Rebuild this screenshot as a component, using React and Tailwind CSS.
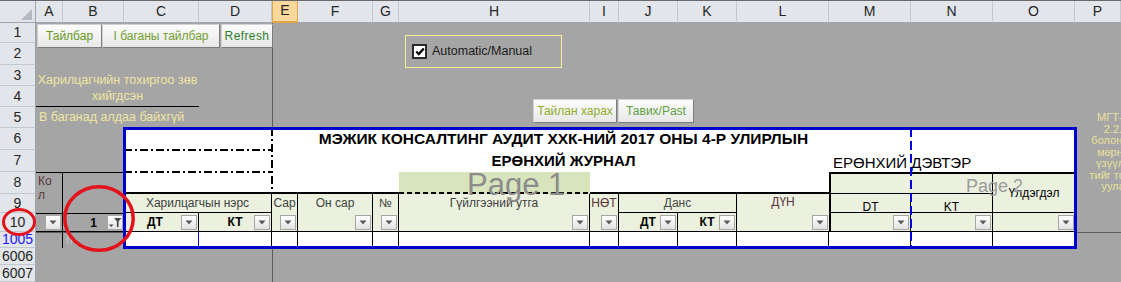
const sans = "font-['Liberation_Sans',Arial,sans-serif]";

const letters = ["A", "B", "C", "D", "E", "F", "G", "H", "I", "J", "K", "L", "M", "N", "O", "P"];
const rowNums = ["1", "2", "3", "4", "5", "6", "7", "8", "9", "10", "1005", "6006", "6007"];
const sideNote = ["МГТ-ий", "2.2.5", "болон 3.1", "мөрний", "үзүүлэл", "тийг тохир", "уулах"];

function Drop({ filter }) {
  return (
    <span className="absolute right-px bottom-px flex h-[15px] w-[16px] items-center justify-center border border-[#a6a6a6] bg-linear-to-b from-white to-[#e3e3e3]">
      {filter ? (
        <svg width="14" height="13" viewBox="0 0 14 13">
          <path d="M1 8.5h4.5L3.25 11z" fill="#4a4a4a" />
          <path d="M6 2h7.5l-2.9 3.6V11H8.9V5.6z" fill="#4a4a4a" />
        </svg>
      ) : (
        <svg width="8" height="5" viewBox="0 0 8 5">
          <path d="M0.5 0.5h7L4 4.5z" fill="#5a5a5a" />
        </svg>
      )}
    </span>
  );
}

function Btn({ className, children }) {
  return (
    <div
      className={`absolute flex h-[24px] items-center justify-center border border-[#d2d2d2] border-r-[#7c7c7c] border-b-[#7c7c7c] bg-linear-to-b from-[#fcfcfc] to-[#e8e8e8] text-[12px] whitespace-nowrap ${className}`}
    >
      {children}
    </div>
  );
}

export default function App() {
  return (
    <div
      className={`relative grid h-[282px] w-[1121px] overflow-hidden bg-[#a5a5a5] text-[12px] ${sans} grid-cols-[36px_27px_61px_75px_73px_26px_75px_26px_191px_29px_59px_59px_92px_82px_82px_82px_46px] grid-rows-[22px_21px_22px_21px_21px_21px_22px_22px_22px_19px_19px_16px_17px_17px]`}
    >
      {/* frozen panes */}
      <div className="col-[6/7] row-[2/15] w-px justify-self-start bg-[#5e5e5e]" />
      <div className="col-[1/18] row-[12/13] h-px self-start bg-[#5e5e5e]" />

      {/* column headers */}
      <div className="col-[1/18] row-[1/2] grid grid-cols-subgrid">
        <div className="relative border-r border-b border-[#9da5b0] bg-[#e2e5ea]">
          <svg className="absolute top-0 left-0" width="36" height="22">
            <path d="M32 9V20H21z" fill="#b4b9c1" />
          </svg>
        </div>
        {letters.map((l) =>
          l === "E" ? (
            <div
              key={l}
              className="flex items-center justify-center border-x border-b-2 border-[#e3a446] bg-[#f9d99b] text-[14px] text-[#262626]"
            >
              {l}
            </div>
          ) : (
            <div
              key={l}
              className="flex items-center justify-center border-r border-b border-r-[#c3c8cf] border-b-[#9da5b0] bg-[#e2e5ea] text-[14px] text-[#262626]"
            >
              {l}
            </div>
          )
        )}
      </div>
      <div className="relative z-10 col-[1/18] row-[1/2] h-px self-start bg-[#6a6a6a]" />

      {/* row headers */}
      <div className="col-[1/2] row-[2/15] grid grid-rows-subgrid">
        {rowNums.map((r) => (
          <div
            key={r}
            className={`flex items-center justify-center border-r border-b border-r-[#9da5b0] border-b-[#c3c8cf] bg-[#e2e5ea] text-[14px] ${
              r === "1005" ? "text-[#1a1aff]" : "text-[#262626]"
            }`}
          >
            {r}
          </div>
        ))}
      </div>

      {/* notes on the grey area */}
      <div className="col-[2/5] row-[4/6] flex flex-col items-center justify-end border-b border-black pb-[2px] text-[12.5px] leading-[16px] whitespace-nowrap text-[#efe6a2]">
        <span>Харилцагчийн тохиргоо зөв</span>
        <span>хийгдсэн</span>
      </div>
      <div className="col-[2/5] row-[6/7] flex items-center pl-[3px] text-[12.5px] whitespace-nowrap text-[#efe6a2]">
        В баганад алдаа байхгүй
      </div>
      <div className="col-[17/18] row-[6/12] w-[82px] justify-self-start pt-[5px] text-center text-[11px] leading-[11.5px] whitespace-nowrap text-[#e9e09c]">
        {sideNote.map((t) => (
          <div key={t}>{t}</div>
        ))}
      </div>

      {/* A:B block */}
      <div className="col-[2/3] row-[9/11] border-t border-r border-black px-[2px] pt-px leading-[14px] text-[#5a3535]">
        Ко
        <br />л
      </div>
      <div className="col-[3/4] row-[9/11] border-t border-black" />
      <div className="relative col-[2/3] row-[11/12] border-y border-r border-black">
        <Drop />
      </div>
      <div className="relative col-[3/4] row-[11/12] flex items-center justify-center border-y border-black font-bold text-black">
        1
        <Drop filter />
      </div>
      <div className="col-[2/3] row-[12/13] border-r border-black" />
      <div className="col-[3/4] row-[12/13] pl-[3px] leading-[16px] text-[#c4c4c4]">h</div>

      {/* title area rows 6-8 */}
      <div className="col-[4/6] row-[7/8] flex flex-col justify-end bg-white">
        <div className="h-[2px] translate-y-px bg-[repeating-linear-gradient(90deg,#000_0_8px,transparent_8px_11px,#000_11px_13px,transparent_13px_16px)]" />
      </div>
      <div className="col-[4/6] row-[8/9] flex flex-col justify-end bg-white">
        <div className="h-[2px] translate-y-px bg-[repeating-linear-gradient(90deg,#000_0_8px,transparent_8px_11px,#000_11px_13px,transparent_13px_16px)]" />
      </div>
      <div className="col-[4/6] row-[9/10] border-b-2 border-black bg-white" />
      <div className="col-[6/14] row-[7/10] border-b-2 border-black bg-white" />
      <div className="col-[5/6] row-[7/10] w-[2px] translate-x-px justify-self-end bg-[repeating-linear-gradient(180deg,#000_0_8px,transparent_8px_11px,#000_11px_13px,transparent_13px_16px)]" />
      <div className="col-[9/10] row-[9/10] flex flex-col justify-end bg-[#d8e4bc]">
        <div className="h-[2px] bg-[repeating-linear-gradient(90deg,#000_0_5px,transparent_5px_8px)]" />
      </div>
      <div className="col-[7/14] row-[7/8] flex items-center justify-center text-[15.5px] font-bold whitespace-nowrap text-black">
        МЭЖИК КОНСАЛТИНГ АУДИТ ХХК-НИЙ 2017 ОНЫ 4-Р УЛИРЛЫН
      </div>
      <div className="col-[7/14] row-[8/9] flex items-center justify-center text-[15px] font-bold whitespace-nowrap text-black">
        ЕРӨНХИЙ ЖУРНАЛ
      </div>
      <div className="col-[14/17] row-[7/9] bg-white" />
      <div className="col-[14/17] row-[8/9] flex items-end pl-[4px] text-[15px] leading-[18px] whitespace-nowrap text-black">
        ЕРӨНХИЙ ДЭВТЭР
      </div>
      <div className="col-[14/16] row-[9/10] border-t-2 border-r border-l-2 border-b border-black bg-[#ebf1de]" />
      <div className="col-[16/17] row-[9/11] flex items-center justify-center border-t-2 border-b border-black bg-[#ebf1de] text-black">
        Үлдэгдэл
      </div>

      {/* header rows 9-10 */}
      <div className="col-[4/6] row-[10/11] flex items-center justify-center border-r border-b border-black bg-[#ebf1de] text-[#404040]">
        Харилцагчын нэрс
      </div>
      <div className="relative col-[4/5] row-[11/12] flex items-center justify-center border-r border-b border-black bg-[#ebf1de] pr-[12px] font-bold text-black">
        ДТ
        <Drop />
      </div>
      <div className="relative col-[5/6] row-[11/12] flex items-center justify-center border-r border-b border-black bg-[#ebf1de] font-bold text-black">
        КТ
        <Drop />
      </div>
      <div className="relative col-[6/7] row-[10/12] flex justify-center border-r border-b border-black bg-[#ebf1de] pt-[2px] leading-[15px] text-[#404040]">
        Сар
        <Drop />
      </div>
      <div className="relative col-[7/8] row-[10/12] flex justify-center border-r border-b border-black bg-[#ebf1de] pt-[2px] leading-[15px] text-[#404040]">
        Он сар
        <Drop />
      </div>
      <div className="relative col-[8/9] row-[10/12] flex justify-center border-r border-b border-black bg-[#ebf1de] pt-[2px] leading-[15px] text-[#404040]">
        №
        <Drop />
      </div>
      <div className="relative col-[9/10] row-[10/12] flex justify-center border-r border-b border-black bg-[#ebf1de] pt-[2px] leading-[15px] text-[#404040]">
        Гүйлгээний утга
        <Drop />
      </div>
      <div className="relative col-[10/11] row-[10/12] flex justify-center border-r border-b border-black bg-[#ebf1de] pt-[2px] leading-[15px] text-[#5a3535]">
        НӨТ
        <Drop />
      </div>
      <div className="col-[11/13] row-[10/11] flex items-center justify-center border-r border-b border-black bg-[#ebf1de] text-[#474747]">
        Данс
      </div>
      <div className="relative col-[11/12] row-[11/12] flex items-center justify-center border-r border-b border-black bg-[#ebf1de] font-bold text-black">
        ДТ
        <Drop />
      </div>
      <div className="relative col-[12/13] row-[11/12] flex items-center justify-center border-r border-b border-black bg-[#ebf1de] font-bold text-black">
        КТ
        <Drop />
      </div>
      <div className="relative col-[13/14] row-[10/12] flex justify-center border-b border-black bg-[#ebf1de] pt-[1px] leading-[15px] text-[#5a3540]">
        ДҮН
        <Drop />
      </div>
      <div className="col-[14/15] row-[10/11] flex justify-center border-r border-b border-l-2 border-black bg-[#ebf1de] pt-[6px] leading-[14px] text-black">
        DT
      </div>
      <div className="col-[15/16] row-[10/11] flex justify-center border-r border-b border-black bg-[#ebf1de] pt-[6px] leading-[14px] text-black">
        KT
      </div>
      <div className="relative col-[14/15] row-[11/12] border-r border-b border-l-2 border-black bg-[#ebf1de]">
        <Drop />
      </div>
      <div className="relative col-[15/16] row-[11/12] border-r border-b border-black bg-[#ebf1de]">
        <Drop />
      </div>
      <div className="relative col-[16/17] row-[11/12] border-b border-black bg-[#ebf1de]">
        <Drop />
      </div>

      {/* data row 1005 */}
      <div className="col-[4/5] row-[12/13] border-r border-[#0000cc] bg-white" />
      <div className="col-[5/6] row-[12/13] border-r border-black bg-white" />
      <div className="col-[6/7] row-[12/13] border-r border-black bg-white" />
      <div className="col-[7/8] row-[12/13] border-r border-black bg-white" />
      <div className="col-[8/9] row-[12/13] border-r border-black bg-white" />
      <div className="col-[9/10] row-[12/13] border-r border-black bg-white" />
      <div className="col-[10/11] row-[12/13] border-r border-black bg-white" />
      <div className="col-[11/12] row-[12/13] border-r border-black bg-white" />
      <div className="col-[12/13] row-[12/13] border-r border-black bg-white" />
      <div className="col-[13/14] row-[12/13] border-r border-black bg-white" />
      <div className="col-[14/15] row-[12/13] border-r border-black bg-white" />
      <div className="col-[15/16] row-[12/13] border-r border-black bg-white" />
      <div className="col-[16/17] row-[12/13] bg-white" />

      {/* page break and print area frame */}
      <div className="z-10 col-[15/16] row-[7/13] -ml-px w-[2px] justify-self-start bg-[repeating-linear-gradient(180deg,#0000dd_0_9px,transparent_9px_13px)]" />
      <div className="pointer-events-none z-10 col-[4/17] row-[7/13] -mt-px -mr-[2px] -mb-px -ml-px border-[3px] border-[#0000cc]" />

      {/* page watermarks */}
      <div className="pointer-events-none absolute top-[169px] left-[467px] z-20 text-[31px] leading-none whitespace-nowrap text-[#8c8c8c]">
        Page 1
      </div>
      <div className="pointer-events-none absolute top-[177px] left-[966px] z-20 text-[18px] leading-none whitespace-nowrap text-[#9c9c9c]">
        Page 2
      </div>

      {/* floating buttons */}
      <Btn className="top-[24px] left-[37px] z-20 w-[65px] text-[#679a22]">Тайлбар</Btn>
      <Btn className="top-[24px] left-[102px] z-20 w-[118px] text-[#74a030]">I баганы тайлбар</Btn>
      <Btn className="top-[24px] left-[221px] z-20 w-[52px] tracking-[0.4px] text-[#2f7f2a]">Refresh</Btn>
      <Btn className="top-[99px] left-[533px] z-20 w-[84px] text-[#8fae2c]">Тайлан харах</Btn>
      <Btn className="top-[99px] left-[618px] z-20 w-[76px] text-[#5fa03e]">Тавих/Past</Btn>

      <div className="absolute top-[35px] left-[405px] z-20 flex h-[33px] w-[157px] items-center border border-[#f6f093] pl-[6px]">
        <span className="flex h-[15px] w-[15px] items-center justify-center border-2 border-[#2a2a2a] bg-white">
          <svg width="10" height="9" viewBox="0 0 10 9">
            <path d="M1.2 4.4l2.6 2.7L8.8 1.4" fill="none" stroke="#000" strokeWidth="2.2" />
          </svg>
        </span>
        <span className="ml-[5px] text-[12.5px] whitespace-nowrap text-[#1a1a1a]">Automatic/Manual</span>
      </div>

      {/* red marks */}
      <svg className="pointer-events-none absolute top-0 left-0 z-30" width="1121" height="282">
        <ellipse cx="19" cy="222" rx="15.5" ry="12.5" fill="none" stroke="#e3131b" strokeWidth="3" />
        <ellipse cx="99" cy="218.5" rx="34.2" ry="31.8" fill="none" stroke="#e3131b" strokeWidth="3.5" />
      </svg>
    </div>
  );
}
